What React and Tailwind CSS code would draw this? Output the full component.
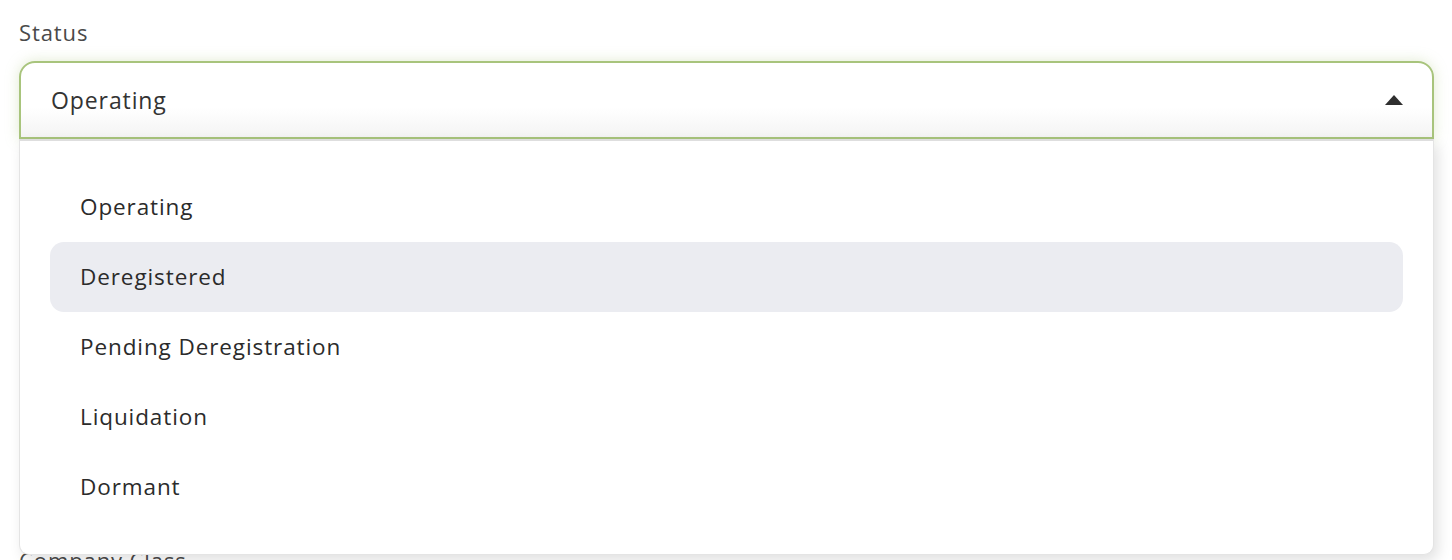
const options = ['Operating', 'Deregistered', 'Pending Deregistration', 'Liquidation', 'Dormant']

function Caret() {
  return (
    <svg width="20" height="12" viewBox="0 0 20 12" className="block">
      <path d="M10 1 L19 11 L1 11 Z" fill="#2f2f2f" />
    </svg>
  )
}

export default function App() {
  return (
    <div
      className="w-[1452px] h-[560px] overflow-hidden bg-white tracking-[0.9px]"
      style={{ fontFamily: '"Open Sans", "Liberation Sans", sans-serif' }}
    >
      <div className="px-[19px] pt-[17px]">
        <div className="text-[22px] leading-[30px] text-[#4a4a4a]">Status</div>

        <div className="relative mt-[14px] w-[1415px]">
          <div className="h-[78px] rounded-t-[16px] border-2 border-[#a8c47c] bg-gradient-to-b from-white from-60% to-[#f4f4f4] shadow-[0_0_14px_rgba(168,196,124,0.35)] flex items-center justify-between pl-[30px] pr-[28px]">
            <span className="text-[23px] text-[#333]">Operating</span>
            <Caret />
          </div>

          <div className="relative z-10 h-[416px] rounded-b-[10px] border-x border-b border-[#e4e4e4] border-t-2 border-t-[#dedede] bg-white shadow-[4px_6px_14px_rgba(0,0,0,0.12)] px-[30px] pt-[31px]">
            {options.map((opt) => (
              <div
                key={opt}
                className={
                  'h-[70px] flex items-center pl-[30px] rounded-[14px] text-[22.5px] text-[#2b2b2b] ' +
                  (opt === 'Deregistered' ? 'bg-[#ebecf1]' : '')
                }
              >
                {opt}
              </div>
            ))}
          </div>

          <div className="mt-[-10px] text-[22px] leading-[30px] text-[#4a4a4a]">Company Class</div>
        </div>
      </div>
    </div>
  )
}
